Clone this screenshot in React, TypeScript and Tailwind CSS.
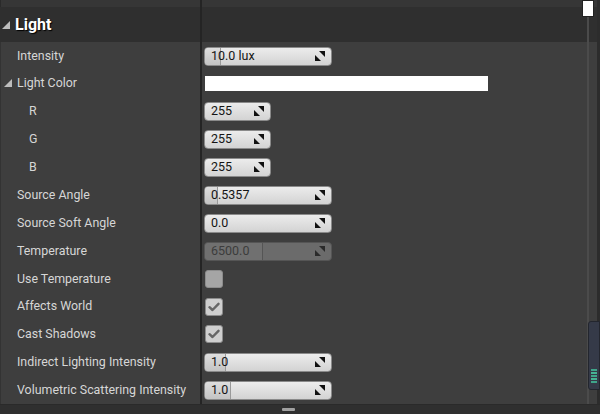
import React from "react";

type Row =
  | { kind: "field"; label: string; value: string; width: number; fill: number; indent?: number; disabled?: boolean; height: number }
  | { kind: "color"; label: string; height: number }
  | { kind: "check"; label: string; checked: boolean; height: number };

const ROWS: Row[] = [
  { kind: "field", label: "Intensity", value: "10.0 lux", width: 128, fill: 16, height: 28 },
  { kind: "color", label: "Light Color", height: 27 },
  { kind: "field", label: "R", value: "255", width: 67, fill: 0, indent: 1, height: 28 },
  { kind: "field", label: "G", value: "255", width: 67, fill: 0, indent: 1, height: 28 },
  { kind: "field", label: "B", value: "255", width: 67, fill: 0, indent: 1, height: 28 },
  { kind: "field", label: "Source Angle", value: "0.5357", width: 128, fill: 13, height: 28 },
  { kind: "field", label: "Source Soft Angle", value: "0.0", width: 128, fill: 0, height: 28 },
  { kind: "field", label: "Temperature", value: "6500.0", width: 128, fill: 58, disabled: true, height: 28 },
  { kind: "check", label: "Use Temperature", checked: false, height: 28 },
  { kind: "check", label: "Affects World", checked: true, height: 27 },
  { kind: "check", label: "Cast Shadows", checked: true, height: 28 },
  { kind: "field", label: "Indirect Lighting Intensity", value: "1.0", width: 128, fill: 21, height: 28 },
  { kind: "field", label: "Volumetric Scattering Intensity", value: "1.0", width: 128, fill: 26, height: 28 },
];

const SpinArrows = ({ dim }: { dim?: boolean }) => (
  <svg width="10" height="10" viewBox="0 0 10 10" className="shrink-0">
    <polygon points="4,0 10,0 10,6" fill={dim ? "#2a2a2a" : "#111"} />
    <polygon points="0,4 0,10 6,10" fill={dim ? "#2a2a2a" : "#111"} />
  </svg>
);

const Triangle = () => (
  <svg width="8" height="8" viewBox="0 0 8 8" className="shrink-0">
    <polygon points="8,0 8,8 0,8" fill="#bdbdbd" />
  </svg>
);

const SpinBox = ({ value, width, fill, disabled }: { value: string; width: number; fill: number; disabled?: boolean }) => (
  <div
    className={
      "relative flex h-[19px] items-center overflow-hidden rounded-[4px] border " +
      (disabled
        ? "border-[#555] bg-[#6b6b6b] text-[#3c3c3c]"
        : "border-[#8a8a8a] bg-gradient-to-b from-[#ececec] to-[#d3d3d3] text-[#141414]")
    }
    style={{ width }}
  >
    {fill > 0 && (
      <div
        className={
          "absolute left-0 top-0 h-full rounded-l-[3px] border-r " +
          (disabled ? "border-[#555] bg-[#707070]" : "border-[#9a9a9a] bg-gradient-to-b from-[#dedede] to-[#c4c4c4]")
        }
        style={{ width: fill }}
      />
    )}
    <span className="relative pl-[6px] text-[12.5px] leading-none">{value}</span>
    <div className="relative ml-auto mr-[6px]">
      <SpinArrows dim={disabled} />
    </div>
  </div>
);

const CheckBox = ({ checked }: { checked: boolean }) => (
  <div
    className={
      "flex h-[18px] w-[18px] items-center justify-center rounded-[3px] border " +
      (checked ? "border-[#8c8c8c] bg-[#cfcfcf]" : "border-[#8c8c8c] bg-[#a5a5a5]")
    }
  >
    {checked && (
      <svg width="12" height="10" viewBox="0 0 12 10">
        <path d="M1.5 5.2 L4.5 8 L10.5 1.8" stroke="#666" strokeWidth="2.4" fill="none" strokeLinecap="round" strokeLinejoin="round" />
      </svg>
    )}
  </div>
);

export default function App() {
  return (
    <div
      className="relative h-[414px] w-[600px] overflow-hidden bg-[#3e3e3e] text-[12.4px] text-[#d6d6d6]"
      style={{ fontFamily: "Roboto, 'Noto Sans', sans-serif" }}
    >
      <div className="flex h-[7px] bg-[#363636]">
        <div className="w-[200px] border-l border-[#2a2a2a]" />
        <div className="w-[2px] bg-[#242424]" />
      </div>

      <div className="flex h-[35px] bg-[#2f2f2f]">
        <div className="flex w-[200px] items-center gap-[5px] pl-[2px]">
          <Triangle />
          <span className="text-[16px] font-bold text-white [text-shadow:1px_1px_1px_#000]">Light</span>
        </div>
        <div className="w-[2px] bg-[#242424]" />
      </div>

      {ROWS.map((row) => (
        <div key={row.label} className="flex" style={{ height: row.height }}>
          <div className="flex w-[200px] items-center border-l border-[#333]">
            {row.kind === "color" ? (
              <div className="flex items-center gap-[5px] pl-[3px]">
                <Triangle />
                <span>{row.label}</span>
              </div>
            ) : (
              <span className={row.kind === "field" && row.indent ? "pl-[28px]" : "pl-[16px]"}>{row.label}</span>
            )}
          </div>
          <div className="w-[2px] bg-[#242424]" />
          <div className="flex flex-1 items-center pl-[2px]">
            {row.kind === "field" && (
              <SpinBox value={row.value} width={row.width} fill={row.fill} disabled={row.disabled} />
            )}
            {row.kind === "color" && <div className="ml-[1px] h-[15px] w-[283px] bg-white" />}
            {row.kind === "check" && (
              <div className="ml-[1px]">
                <CheckBox checked={row.checked} />
              </div>
            )}
          </div>
        </div>
      ))}

      <div className="flex h-[10px] border-t border-[#2a2a2a] bg-[#2f2f2f] pl-[282px]">
        <div className="mt-[3px] h-[3px] w-[13px] rounded-[1px] bg-[#a0a0a0]" />
      </div>

      {/* outer scrollbar */}
      <div className="absolute right-[11px] top-[17px] h-[387px] w-[2px] bg-[#4b4b4b]" />
      <div className="absolute right-[6px] top-0 h-[17px] w-[12px] border border-[#222] bg-white" />
      <div className="absolute right-0 top-0 h-[404px] w-[3px] bg-[#2c2c2c]" />
      <div className="absolute right-0 top-[321px] flex h-[69px] w-[12px] flex-col justify-end rounded-l-[3px] border border-[#23262e] bg-[#353a48] pb-[6px]">
        <div className="mx-[2px] flex flex-col gap-[1px]">
          <div className="h-[2px] bg-[#3fa58a]" />
          <div className="h-[2px] bg-[#46b394]" />
          <div className="h-[2px] bg-[#3fa58a]" />
          <div className="h-[2px] bg-[#46b394]" />
          <div className="h-[2px] bg-[#3fa58a]" />
        </div>
      </div>
    </div>
  );
}
